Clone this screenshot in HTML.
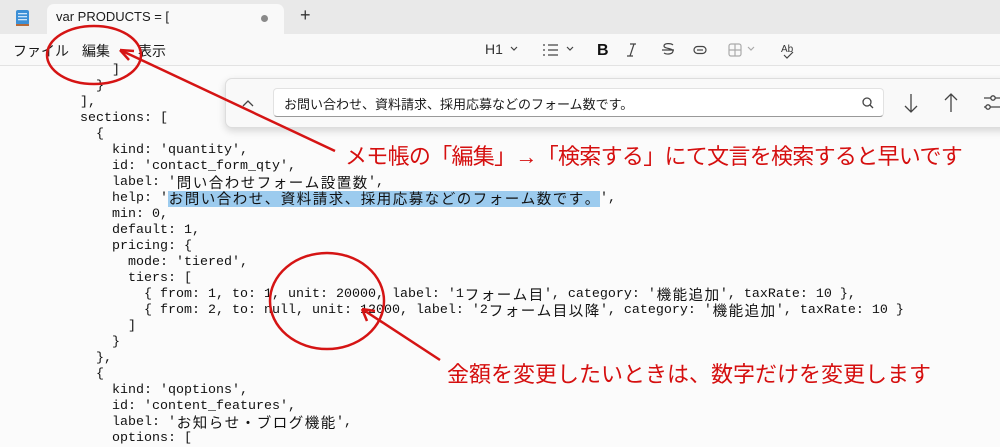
<!DOCTYPE html>
<html><head><meta charset="utf-8"><style>
*{margin:0;padding:0;box-sizing:border-box}
body{width:1000px;height:436px;overflow:hidden;background:#fbfbfb;position:relative;font-family:"Liberation Sans","Noto Sans CJK JP",sans-serif;color:#1a1a1a}
.abs{position:absolute}
#tabbar{left:0;top:0;width:1000px;height:34px;background:#e9e9e9}
#tab{left:47px;top:4px;width:237px;height:31px;background:#f9f9f9;border-radius:7px 7px 0 0}
#menu{left:0;top:34px;width:1000px;height:32px;background:#f9f9f9;border-bottom:1px solid #e3e3e3}
.m{font-size:14px;top:41px}
.code{position:absolute;left:0;height:16px;line-height:16px;font-family:"Liberation Mono",monospace;font-size:13.33px;white-space:pre;color:#111;overflow:visible}
.j{font-family:"Noto Sans CJK JP",sans-serif;font-size:14.5px;display:inline-block;width:16px;height:16px;text-align:center;line-height:16px;vertical-align:top;overflow:hidden}
.hl{background:#9ccbee;display:inline-block;height:16px;vertical-align:top}
.red{color:#d50f0f;font-family:"Liberation Sans","Noto Sans CJK JP",sans-serif;font-size:22px;white-space:nowrap;line-height:28px}
</style></head><body>
<div class="abs" id="tabbar"></div>
<div class="abs" id="tab"></div>
<svg class="abs" style="left:14px;top:7px" width="18" height="20"><rect x="2" y="3" width="13" height="15" rx="2" fill="#3b8fd6"/><rect x="4" y="6" width="9" height="1.3" fill="#cfe6fa"/><rect x="4" y="9" width="9" height="1.3" fill="#cfe6fa"/><rect x="4" y="12" width="9" height="1.3" fill="#cfe6fa"/><rect x="2" y="17" width="13" height="2" fill="#b46a3a"/></svg>
<div class="abs" style="left:56px;top:9px;font-size:13px">var PRODUCTS = [</div>
<div class="abs" style="left:261px;top:15px;width:7px;height:7px;border-radius:50%;background:#8a8a8a"></div>
<div class="abs" style="left:300px;top:5px;font-size:18px;color:#333">+</div>
<div class="abs" id="menu"></div>
<div class="abs m" style="left:13px">ファイル</div>
<div class="abs m" style="left:82px">編集</div>
<div class="abs m" style="left:138px">表示</div>
<div class="abs" style="left:485px;top:41px;font-size:14px;color:#333">H1</div>
<svg class="abs" style="left:470px;top:34px" width="340" height="32" fill="none" stroke="#444" stroke-width="1.2">
<path d="M41 13l3 3 3-3"/>
<path d="M73 11h2M73 16h2M73 21h2M78 11h10M78 16h10M78 21h10"/><path d="M97 13l3 3 3-3"/>
<text x="127" y="21" font-family="Liberation Sans" font-weight="bold" font-size="16" fill="#111" stroke="none">B</text>
<path d="M160 10h6M157 22h6M164 10l-4 12"/>
<path d="M192 16h12M203 11c-2-2-9-2-9 1s9 2 9 5-6 4-9 2"/>
<rect x="224" y="12.5" width="12" height="7" rx="3.5"/><path d="M227 16h6"/>
<rect x="259" y="10" width="12" height="12" rx="2" stroke="#aaa"/><path d="M265 10v12M259 16h12M278 13l3 3 3-3" stroke="#aaa"/>
<text x="311" y="18" font-family="Liberation Sans" font-size="10" fill="#333" stroke="none">Ab</text><path d="M314 21l3 3 6-6"/>
</svg>
<!-- find panel -->
<div class="abs" style="left:225px;top:78px;width:790px;height:50px;background:#f9f9f9;border:1px solid #ddd;border-radius:7px;box-shadow:0 3px 8px rgba(0,0,0,.15)"></div>
<div class="abs" style="left:273px;top:88px;width:611px;height:29px;background:#fff;border:1px solid #e2e2e2;border-bottom:1px solid #999;border-radius:4px"></div>
<div class="abs" style="left:284px;top:94px;font-size:13px">お問い合わせ、資料請求、採用応募などのフォーム数です。</div>
<svg class="abs" style="left:225px;top:78px" width="775" height="50" fill="none" stroke="#444" stroke-width="1.3">
<path d="M18 28l5-5 5 5"/>
<circle cx="642" cy="24" r="4"/><path d="M645 27l3 3"/>
<path d="M686 16v18M680 28l6 6 6-6"/>
<path d="M726 16v18M720 22l6-6 6 6"/>
<path d="M759 20h16M759 29h16"/><circle cx="768" cy="20" r="2.2" fill="#f9f9f9"/><circle cx="763" cy="29" r="2.2" fill="#f9f9f9"/>
</svg>
<!-- code -->
<div class="code" style="top:63px;left:112px">]</div>
<div class="code" style="top:79px;left:96px">}</div>
<div class="code" style="top:95px;left:80px">],</div>
<div class="code" style="top:111px;left:80px">sections: [</div>
<div class="code" style="top:127px;left:96px">{</div>
<div class="code" style="top:143px;left:112px">kind: 'quantity',</div>
<div class="code" style="top:159px;left:112px">id: 'contact_form_qty',</div>
<div class="code" style="top:175px;left:112px">label: '<span class="j">問</span><span class="j">い</span><span class="j">合</span><span class="j">わ</span><span class="j">せ</span><span class="j">フ</span><span class="j">ォ</span><span class="j">ー</span><span class="j">ム</span><span class="j">設</span><span class="j">置</span><span class="j">数</span>',</div>
<div class="code" style="top:191px;left:112px">help: '<span class="hl"><span class="j">お</span><span class="j">問</span><span class="j">い</span><span class="j">合</span><span class="j">わ</span><span class="j">せ</span><span class="j">、</span><span class="j">資</span><span class="j">料</span><span class="j">請</span><span class="j">求</span><span class="j">、</span><span class="j">採</span><span class="j">用</span><span class="j">応</span><span class="j">募</span><span class="j">な</span><span class="j">ど</span><span class="j">の</span><span class="j">フ</span><span class="j">ォ</span><span class="j">ー</span><span class="j">ム</span><span class="j">数</span><span class="j">で</span><span class="j">す</span><span class="j">。</span></span>',</div>
<div class="code" style="top:207px;left:112px">min: 0,</div>
<div class="code" style="top:223px;left:112px">default: 1,</div>
<div class="code" style="top:239px;left:112px">pricing: {</div>
<div class="code" style="top:255px;left:128px">mode: 'tiered',</div>
<div class="code" style="top:271px;left:128px">tiers: [</div>
<div class="code" style="top:287px;left:144px">{ from: 1, to: 1, unit: 20000, label: '1<span class="j">フ</span><span class="j">ォ</span><span class="j">ー</span><span class="j">ム</span><span class="j">目</span>', category: '<span class="j">機</span><span class="j">能</span><span class="j">追</span><span class="j">加</span>', taxRate: 10 },</div>
<div class="code" style="top:303px;left:144px">{ from: 2, to: null, unit: 12000, label: '2<span class="j">フ</span><span class="j">ォ</span><span class="j">ー</span><span class="j">ム</span><span class="j">目</span><span class="j">以</span><span class="j">降</span>', category: '<span class="j">機</span><span class="j">能</span><span class="j">追</span><span class="j">加</span>', taxRate: 10 }</div>
<div class="code" style="top:319px;left:128px">]</div>
<div class="code" style="top:335px;left:112px">}</div>
<div class="code" style="top:351px;left:96px">},</div>
<div class="code" style="top:367px;left:96px">{</div>
<div class="code" style="top:383px;left:112px">kind: 'qoptions',</div>
<div class="code" style="top:399px;left:112px">id: 'content_features',</div>
<div class="code" style="top:415px;left:112px">label: '<span class="j">お</span><span class="j">知</span><span class="j">ら</span><span class="j">せ</span><span class="j">・</span><span class="j">ブ</span><span class="j">ロ</span><span class="j">グ</span><span class="j">機</span><span class="j">能</span>',</div>
<div class="code" style="top:431px;left:112px">options: [</div>
<!-- annotations -->
<svg class="abs" style="left:0;top:0" width="1000" height="436" fill="none" stroke="#d51414" stroke-width="2.5">
<ellipse cx="94" cy="55" rx="47" ry="29"/>
<path d="M335 151L120 50"/><path d="M120 50l14 1M120 50l9 10" />
<ellipse cx="327" cy="301" rx="57" ry="48"/>
<path d="M440 360L362 309"/><path d="M362 309l13 2M362 309l5 12"/>
</svg>
<div class="abs red" style="left:345px;top:143px;letter-spacing:-0.7px">メモ帳の「編集」→「検索する」にて文言を検索すると早いです</div>
<div class="abs red" style="left:447px;top:361px">金額を変更したいときは、数字だけを変更します</div>
</body></html>
